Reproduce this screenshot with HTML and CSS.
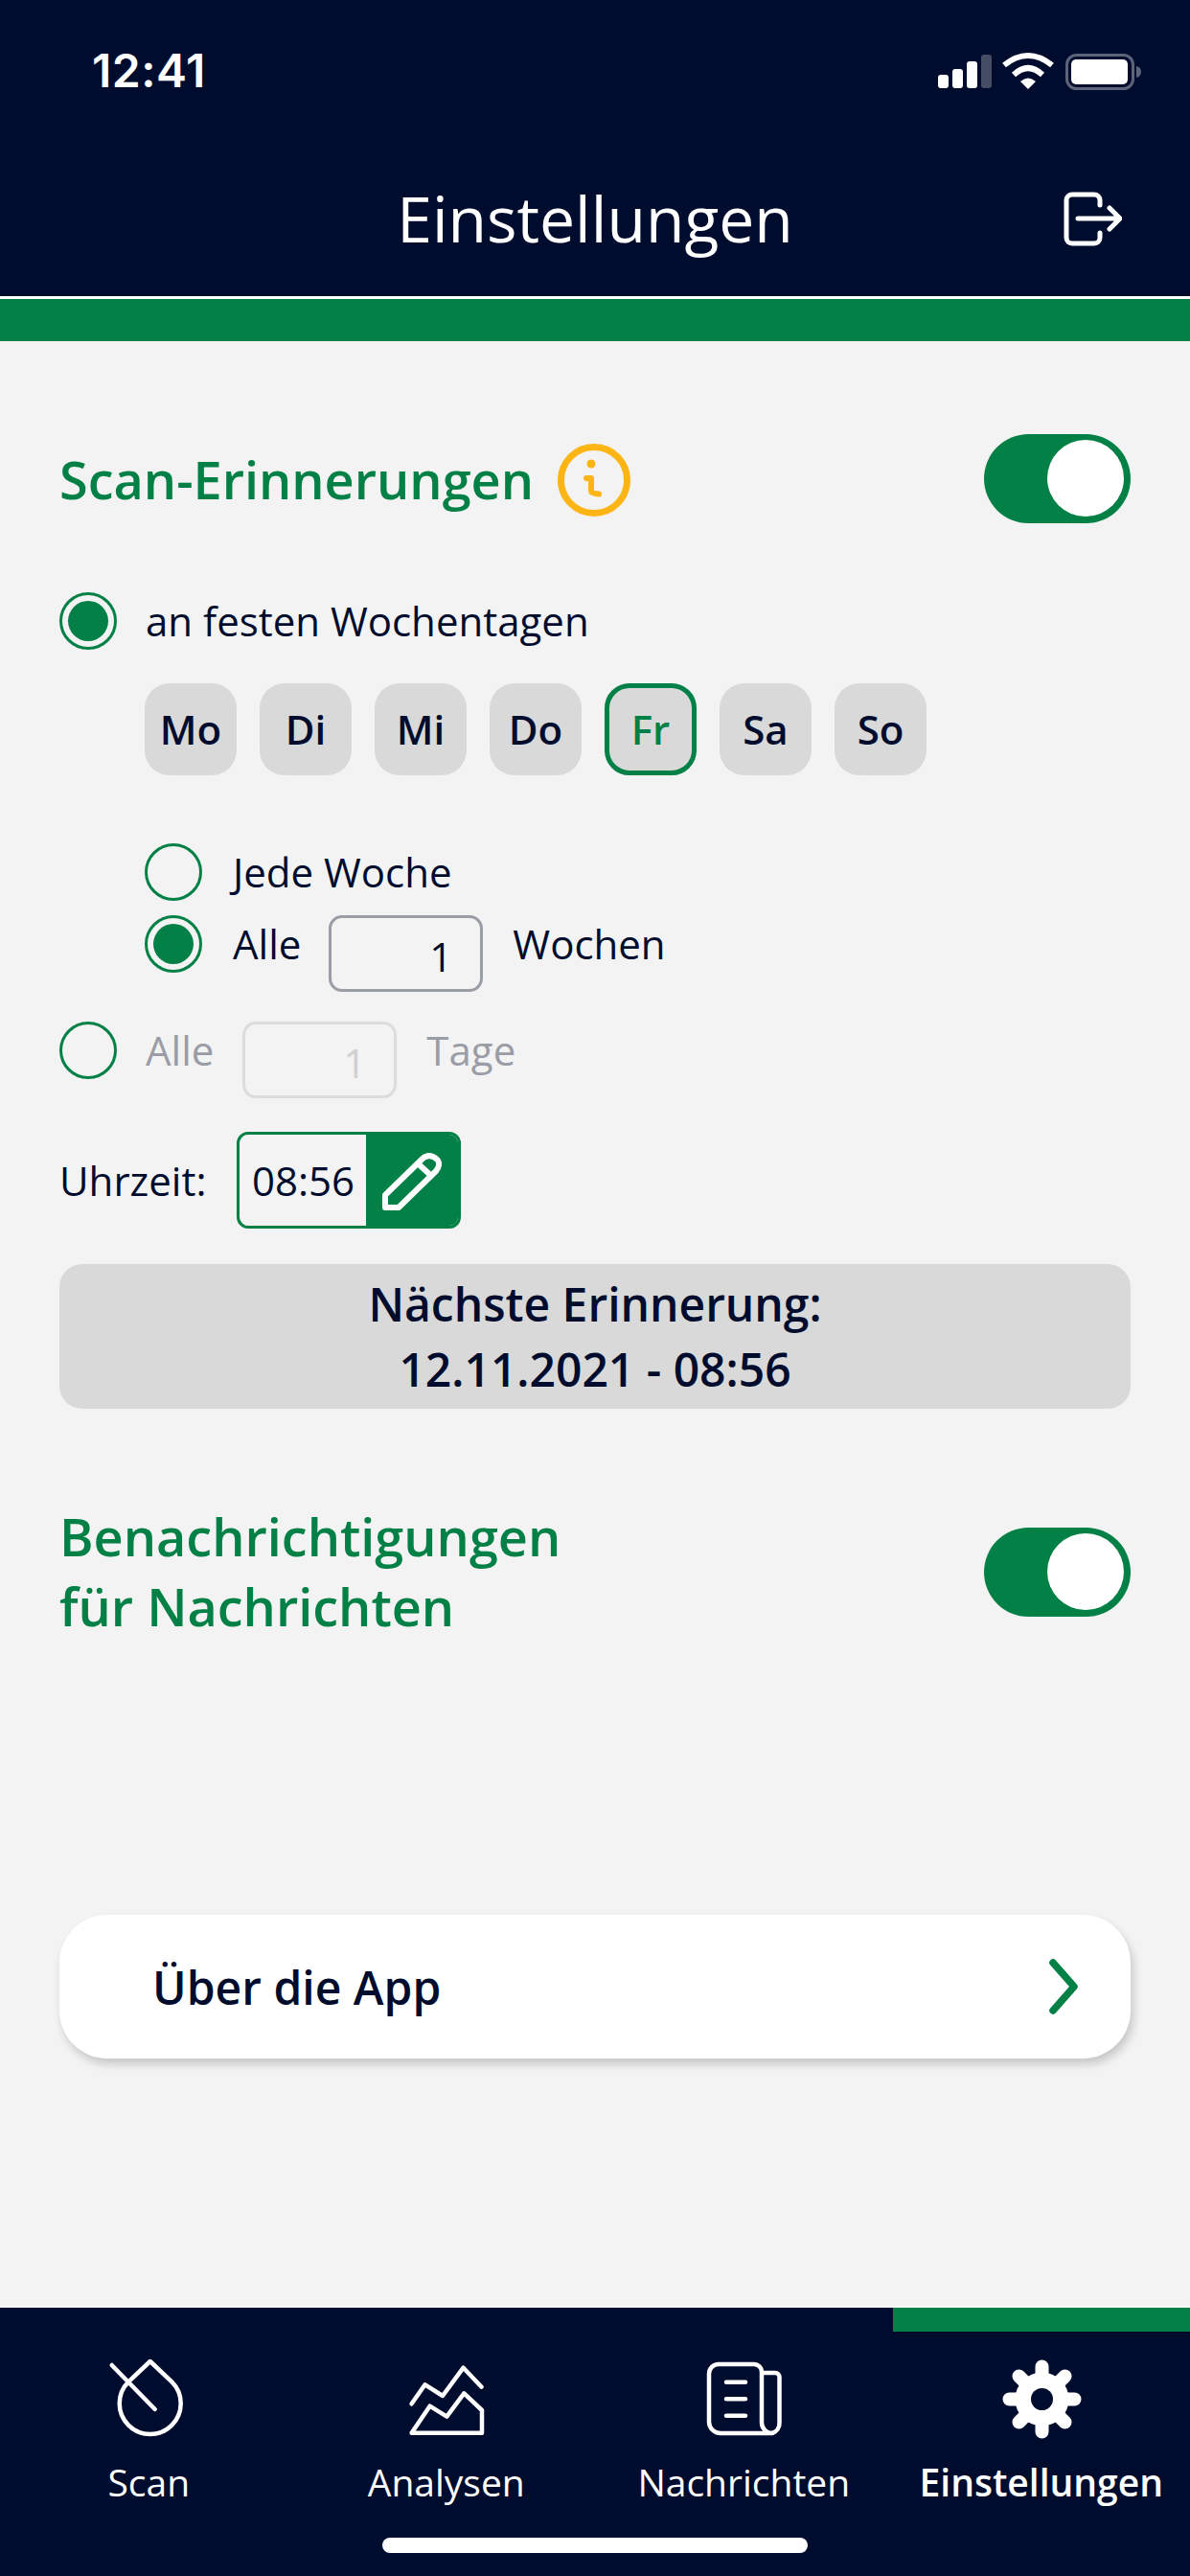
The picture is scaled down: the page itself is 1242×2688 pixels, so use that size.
FILE: index.html
```html
<!DOCTYPE html>
<html lang="de">
<head>
<meta charset="utf-8">
<title>Einstellungen</title>
<link rel="stylesheet" href="styles.css">
</head>
<body>
<div class="app">
  <header class="header">
    <div class="status">
      <span class="clock">12:41</span>
      <svg class="status-icons" viewBox="0 0 220 50" width="220" height="50">
        <rect x="4" y="28" width="11" height="14" rx="3" fill="#fff"/>
        <rect x="19" y="22" width="11" height="20" rx="3" fill="#fff"/>
        <rect x="34" y="14" width="11" height="28" rx="3" fill="#fff"/>
        <rect x="49" y="7" width="11" height="35" rx="3" fill="#454d65"/>
        <path d="M73 18 Q98 -2 123 18" fill="none" stroke="#fff" stroke-width="6"/>
        <path d="M83 28 Q98 14 113 28" fill="none" stroke="#fff" stroke-width="6"/>
        <path d="M90 35 Q98 28 106 35 L98 43 Z" fill="#fff"/>
        <rect x="138.5" y="7.5" width="69" height="35" rx="10" fill="none" stroke="#5d6479" stroke-width="3"/>
        <rect x="143" y="12" width="59" height="26" rx="5" fill="#fff"/>
        <path d="M211 19 Q216 20 216 25 Q216 30 211 31 Z" fill="#5d6479"/>
      </svg>
    </div>
    <div class="titlebar">
      <h1 class="title">Einstellungen</h1>
      <svg class="logout" viewBox="0 0 70 70" width="70" height="70">
        <path d="M47 20 V15 a6 6 0 0 0 -6 -6 H18 a6 6 0 0 0 -6 6 V54 a6 6 0 0 0 6 6 H41 a6 6 0 0 0 6 -6 V49" fill="none" stroke="#fff" stroke-width="5" stroke-linecap="round"/>
        <path d="M24 34 H67 M57 23 L68 34 L57 45" fill="none" stroke="#fff" stroke-width="5" stroke-linecap="round" stroke-linejoin="round"/>
      </svg>
    </div>
  </header>
  <div class="accent"></div>

  <main class="main">
    <section class="section-row">
      <h2 class="heading">Scan-Erinnerungen</h2>
      <svg class="info" viewBox="0 0 76 76" width="76" height="76">
        <circle cx="38" cy="38" r="34.5" fill="none" stroke="#fdb515" stroke-width="7"/>
        <circle cx="35" cy="21" r="4.5" fill="#fdb515"/>
        <path d="M30 36 H35 V49 Q35 52 43 52.5" fill="none" stroke="#fdb515" stroke-width="6" stroke-linecap="round" stroke-linejoin="round"/>
      </svg>
      <div class="toggle"><span class="knob"></span></div>
    </section>

    <div class="option first">
      <span class="radio on"></span>
      <span class="label">an festen Wochentagen</span>
    </div>

    <div class="days">
      <span class="day">Mo</span>
      <span class="day">Di</span>
      <span class="day">Mi</span>
      <span class="day">Do</span>
      <span class="day active">Fr</span>
      <span class="day">Sa</span>
      <span class="day">So</span>
    </div>

    <div class="option nested every">
      <span class="radio"></span>
      <span class="label">Jede Woche</span>
    </div>
    <div class="option nested weeks">
      <span class="radio on"></span>
      <span class="label">Alle</span>
      <span class="number">1</span>
      <span class="label">Wochen</span>
    </div>
    <div class="option disabled daily">
      <span class="radio"></span>
      <span class="label">Alle</span>
      <span class="number">1</span>
      <span class="label">Tage</span>
    </div>

    <div class="time-row">
      <span class="label">Uhrzeit:</span>
      <div class="time-box">
        <span class="time-value">08:56</span>
        <span class="time-edit">
          <svg viewBox="0 0 96 95" width="96" height="95">
            <path d="M20 63 L59 25 Q64 20.5 70 23 Q77 26 76 32 Q75.500 35 73 38 L34 76 H20 Z" fill="none" stroke="#fff" stroke-width="6" stroke-linejoin="round"/>
            <path d="M54 30 L66 41" fill="none" stroke="#fff" stroke-width="6"/>
          </svg>
        </span>
      </div>
    </div>

    <div class="next">
      <span>Nächste Erinnerung:</span>
      <span>12.11.2021 - 08:56</span>
    </div>

    <section class="section-row notify">
      <h2 class="heading">Benachrichtigungen<br>für Nachrichten</h2>
      <div class="toggle"><span class="knob"></span></div>
    </section>

    <a class="about">
      <span>Über die App</span>
      <svg viewBox="0 0 36 62" width="36" height="62">
        <path d="M7 6 L29 31 L7 56" fill="none" stroke="#028045" stroke-width="7.500" stroke-linecap="round" stroke-linejoin="round"/>
      </svg>
    </a>
  </main>

  <footer class="tabbar">
    <nav class="tabs">
      <div class="tab">
        <svg viewBox="0 0 100 100" width="100" height="100">
          <path d="M51.700 11 L74.300 32.400 A32 32 0 1 1 29.100 32.400 Z" fill="none" stroke="#fff" stroke-width="4.500" stroke-linejoin="round"/>
          <path d="M11.700 15 L56.700 61" fill="none" stroke="#fff" stroke-width="4.500" stroke-linecap="round"/>
        </svg>
        <span>Scan</span>
      </div>
      <div class="tab">
        <svg viewBox="0 0 100 100" width="100" height="100">
          <path d="M13.600 55.300 L27.600 35.300 L46 47 L67.600 17.700 L86.600 37.700" fill="none" stroke="#fff" stroke-width="4.500" stroke-linecap="round" stroke-linejoin="round"/>
          <path d="M13.600 85.700 L32.600 57.700 L50.300 68.700 L68.300 44.300 L87 62 V85.700 Z" fill="none" stroke="#fff" stroke-width="4.500" stroke-linejoin="round"/>
        </svg>
        <span>Analysen</span>
      </div>
      <div class="tab">
        <svg viewBox="0 0 100 100" width="100" height="100">
          <path d="M24 14 H61 a8 8 0 0 1 8 8 V75 a11 11 0 0 0 11 11 H26 a12 12 0 0 1 -12 -12 V24 a10 10 0 0 1 10 -10 Z" fill="none" stroke="#fff" stroke-width="4.500" stroke-linejoin="round"/>
          <path d="M69 23 H83 a4.500 4.500 0 0 1 4.500 4.500 V75 a11 11 0 0 1 -7.500 11" fill="none" stroke="#fff" stroke-width="4.500"/>
          <path d="M32 32.700 H52 M32 50.300 H52 M32 67.700 H52" fill="none" stroke="#fff" stroke-width="4.500" stroke-linecap="round"/>
        </svg>
        <span>Nachrichten</span>
      </div>
      <div class="tab active">
        <svg viewBox="0 0 100 100" width="100" height="100">
          <g stroke="#fff" stroke-width="14" stroke-linecap="round">
            <path d="M50.500 16.500 V84.500 M16.500 50.500 H84.500 M26.500 26.500 L74.500 74.500 M74.500 26.500 L26.500 74.500"/>
          </g>
          <circle cx="50.500" cy="50.500" r="28" fill="#fff"/>
          <circle cx="50.500" cy="50.500" r="11.500" fill="#000c2d"/>
        </svg>
        <span>Einstellungen</span>
      </div>
    </nav>
    <div class="home"></div>
  </footer>
</div>
</body>
</html>
```
FILE: styles.css
```css
* { box-sizing: border-box; }
html, body { margin: 0; padding: 0; }
body { font-family: "Open Sans", sans-serif; color: #000c2d; background: #f3f3f3; }
.app { width: 1242px; height: 2688px; display: flex; flex-direction: column; overflow: hidden; }

.header { height: 312px; background: #000c2d; border-bottom: 3px solid #fff; color: #fff; flex: none; }
.status { height: 100px; padding: 50px 47px 0 96px; display: flex; justify-content: space-between; align-items: flex-start; }
.clock { font-family: Inter, "Liberation Sans", sans-serif; font-size: 48px; font-weight: 600; line-height: 48px; letter-spacing: 0.5px; }
.status-icons { display: block; }
.titlebar { position: relative; height: 94px; margin-top: 80px; display: flex; align-items: center; justify-content: center; }
.title { margin: 0; font-size: 66px; font-weight: 400; line-height: 94px; }
.logout { position: absolute; right: 71px; top: 14px; }
.accent { height: 44px; background: #028045; flex: none; }

.main { flex: 1; padding: 97px 62px 0; display: flex; flex-direction: column; }
.section-row { display: flex; align-items: center; }
.heading { margin: 0; color: #028045; font-size: 54px; font-weight: 600; line-height: 72px; }
.info { margin-left: 25px; margin-top: 2px; }
.toggle { margin-left: auto; width: 153px; height: 93px; border-radius: 47px; background: #028045; padding: 6px 7px 7px 0; display: flex; justify-content: flex-end; flex: none; }
.knob { width: 80px; height: 80px; border-radius: 50%; background: #fff; }

.option { display: flex; align-items: flex-start; }
.first { margin-top: 72px; }
.nested { padding-left: 89px; }
.every { margin-top: 71px; }
.weeks { margin-top: 15px; }
.daily { margin-top: 31px; }
.radio { width: 60px; height: 60px; border-radius: 50%; border: 3px solid #028045; flex: none; padding: 6px; }
.radio.on::before { content: ""; display: block; width: 42px; height: 42px; border-radius: 50%; background: #028045; }
.label { font-size: 42px; line-height: 60px; white-space: nowrap; }
.option .label { margin-left: 30px; }
.nested .label { margin-left: 32px; }
.option .number + .label { margin-left: 31px; }
.number { margin-left: 30px; width: 161px; height: 80px; border: 3px solid #9a9ca6; border-radius: 14px; font-size: 42px; line-height: 80px; text-align: right; padding-right: 29px; }
.nested .number { margin-left: 29px; }
.disabled .label { color: #9a9ca6; }
.disabled .number { border-color: #dcdcdc; color: #d0d0d0; }

.days { display: flex; gap: 24px; margin-top: 35px; padding-left: 89px; }
.day { width: 96px; height: 96px; border-radius: 26px; background: #d9d9d9; font-size: 42px; font-weight: 600; display: flex; align-items: center; justify-content: center; padding-bottom: 2px; }
.day.active { border: 5px solid #028045; color: #028045; }

.time-row { display: flex; align-items: center; gap: 32px; margin-top: 35px; }
.time-box { width: 234px; height: 101px; border: 3px solid #028045; border-radius: 12px; display: flex; overflow: hidden; }
.time-value { width: 132px; font-size: 42px; line-height: 95px; text-align: center; flex: none; }
.time-edit { flex: 1; background: #028045; }
.time-edit svg { display: block; }

.next { margin-top: 37px; height: 151px; border-radius: 24px; background: #d9d9d9; display: flex; flex-direction: column; align-items: center; justify-content: center; font-size: 48px; font-weight: 600; line-height: 68px; }

.notify { margin-top: 97px; }
.notify .heading { line-height: 73px; }

.about { margin-top: 285px; height: 150px; border-radius: 50px; background: #fff; box-shadow: 3px 6px 10px rgba(0,0,0,.18); display: flex; align-items: center; justify-content: space-between; padding: 0 52px 0 97px; font-size: 48px; font-weight: 600; flex: none; }
.about svg { display: block; }

.tabbar { height: 282px; flex: none; background: #000c2d; border-top: 2px solid #f9f9f9; color: #fff; }
.tabs { display: grid; grid-template-columns: repeat(4, 1fr); }
.tab { display: flex; flex-direction: column; align-items: center; font-size: 39px; line-height: 52px; border-top: 25px solid transparent; padding-top: 20px; }
.tab svg { display: block; margin-bottom: 11px; }
.tab.active { border-top-color: #028045; font-weight: 600; }
.tab span { white-space: nowrap; }
.home { width: 444px; height: 16px; border-radius: 8px; background: #fff; margin: 32px auto 0; }
```
